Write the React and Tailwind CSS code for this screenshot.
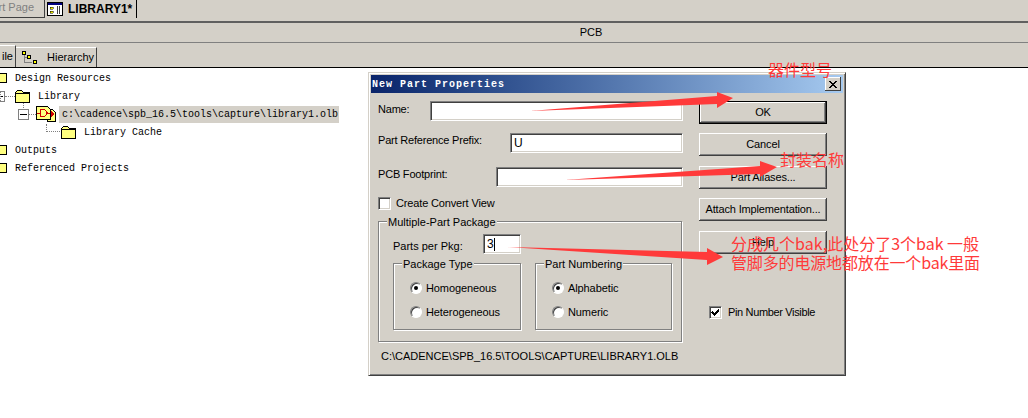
const UI = "font-['Liberation_Sans',sans-serif]"

function Folder() {
  return (
    <svg width="15" height="13" viewBox="0 0 15 13" shapeRendering="crispEdges">
      <path d="M0.5 12.5V2.5L2.5 0.5H6.5L8.5 2.5H14.5V12.5Z" fill="#ffff80" stroke="#000" />
      <path d="M1 3.5H14" stroke="#000" />
    </svg>
  )
}

function Marker() {
  return (
    <svg width="7" height="10" viewBox="0 0 7 10" shapeRendering="crispEdges">
      <path d="M-1 0.5H6.5V9.5H-1Z" fill="#ffff80" stroke="#000" />
    </svg>
  )
}

function LibraryIcon() {
  return (
    <svg width="20" height="16" viewBox="0 0 20 16" shapeRendering="crispEdges">
      <path d="M11.5 3.5H16.5L19.5 6.5V15.5H11.5Z" fill="#ffff80" stroke="#000" />
      <path d="M0.5 0.5H11.5L14.5 3.5V13.5H0.5Z" fill="#ffff80" stroke="#000" />
      <path d="M4.5 3.5V10.5H8.5L11.5 7L8.5 3.5Z M1 7H4 M11 7H14" fill="none" stroke="#d00000" />
      <path d="M15 5L18 8L15 11Z" fill="#d00000" />
    </svg>
  )
}

function MinusBox({ className = '' }) {
  return (
    <span className={`flex h-[11px] w-[11px] shrink-0 items-center justify-center border border-[#808080] bg-white ${className}`}>
      <span className="h-px w-[7px] bg-black" />
    </span>
  )
}

function TreeRow({ indent, children, text, selected }) {
  return (
    <div className="flex h-[18px] items-center whitespace-pre font-['Liberation_Mono',monospace] text-[10px] text-black" style={{ paddingLeft: indent }}>
      {children}
      <span className={selected ? 'ml-[3px] flex h-[17px] w-[280px] items-center bg-[#d4d0c8] pl-[3px]' : 'ml-[8px]'}>{text}</span>
    </div>
  )
}

function Field({ label, width, value, leading }) {
  return (
    <div className="flex h-[20px] items-start justify-between">
      <span className={`text-[11px] tracking-[-0.2px] ${leading}`}>{label}</span>
      <Input width={width} value={value} />
    </div>
  )
}

function Input({ width, value, caret }) {
  return (
    <span className="flex h-[20px] items-center border border-t-[#808080] border-r-white border-b-white border-l-[#808080] bg-white pl-[3px] text-[12px] shadow-[inset_1px_1px_0_#404040,inset_-1px_-1px_0_#d4d0c8]" style={{ width }}>
      {value}
      {caret && <span className="h-[13px] w-px bg-black" />}
    </span>
  )
}

function Button({ label, primary }) {
  return (
    <button className={`flex h-[23px] w-[128px] items-center justify-center bg-[#d4d0c8] text-[11px] tracking-[-0.15px] whitespace-nowrap ${primary ? 'border border-black shadow-[inset_-1px_-1px_0_#404040,inset_1px_1px_0_#fff,inset_-2px_-2px_0_#808080]' : 'shadow-[inset_-1px_-1px_0_#404040,inset_1px_1px_0_#fff,inset_-2px_-2px_0_#808080]'}`}>
      {label}
    </button>
  )
}

function Check({ checked }) {
  return (
    <span className="flex h-[13px] w-[13px] shrink-0 items-center justify-center border border-t-[#808080] border-r-white border-b-white border-l-[#808080] bg-white shadow-[inset_1px_1px_0_#404040,inset_-1px_-1px_0_#d4d0c8]">
      {checked && (
        <svg width="9" height="9" viewBox="0 0 9 9" shapeRendering="crispEdges">
          <path d="M1 4L3.5 6.5L8 1.5" fill="none" stroke="#000" strokeWidth="2" />
        </svg>
      )}
    </span>
  )
}

function Radio({ label, checked }) {
  return (
    <div className="flex h-[24px] items-center gap-[4px] text-[11px] tracking-[-0.1px]">
      <span className="flex h-[12px] w-[12px] shrink-0 items-center justify-center rounded-full border border-t-[#808080] border-r-white border-b-white border-l-[#808080] bg-white shadow-[inset_1px_1px_0_#404040]">
        {checked && <span className="h-[4px] w-[4px] rounded-full bg-black" />}
      </span>
      {label}
    </div>
  )
}

function Group({ title, className = '', children }) {
  return (
    <div className={`relative shrink-0 border border-[#808080] shadow-[inset_1px_1px_0_#fff,1px_1px_0_#fff] ${className}`}>
      <span className="absolute top-[-8px] left-[8px] bg-[#d4d0c8] px-[1px] text-[11px] leading-[16px] whitespace-nowrap">{title}</span>
      {children}
    </div>
  )
}

function Dialog() {
  return (
    <div className={`absolute top-[72px] left-[368px] flex h-[304px] w-[478px] flex-col border border-t-[#d4d0c8] border-r-[#404040] border-b-[#404040] border-l-[#d4d0c8] bg-[#d4d0c8] p-[2px] text-black shadow-[inset_1px_1px_0_#fff,inset_-1px_-1px_0_#808080] ${UI}`}>
      <div className="flex h-[18px] items-center justify-between bg-gradient-to-r from-[#0a246a] to-[#a6caf0] pr-[2px] pl-[1px]">
        <span className="font-['Liberation_Mono',monospace] text-[10px] font-bold tracking-[1px] text-white">New Part Properties</span>
        <span className="flex h-[14px] w-[16px] items-center justify-center bg-[#d4d0c8] shadow-[inset_-1px_-1px_0_#404040,inset_1px_1px_0_#fff]">
          <svg width="8" height="7" viewBox="0 0 8 7" shapeRendering="crispEdges">
            <path d="M0 0L8 7M8 0L0 7" stroke="#000" strokeWidth="1.5" />
          </svg>
        </span>
      </div>
      <div className="flex pl-[7px]">
        <div className="flex w-[305px] shrink-0 flex-col pt-[8px]">
          <Field label="Name:" width={253} leading="leading-[16px]" />
          <div className="mt-[12px]"><Field label="Part Reference Prefix:" width={173} value="U" leading="leading-[14px]" /></div>
          <div className="mt-[14px]"><Field label="PCB Footprint:" width={187} leading="leading-[14px]" /></div>
          <div className="mt-[9px] flex h-[14px] items-center gap-[5px] text-[11px] tracking-[-0.15px]">
            <Check />
            Create Convert View
          </div>
          <Group title="Multiple-Part Package" className="mt-[11px] h-[121px] w-[304px] pt-[12px] pl-[14px]">
            <div className="flex h-[20px] w-[128px] items-start justify-between">
              <span className="text-[11px] leading-[24px]">Parts per Pkg:</span>
              <Input width={38} value="3" caret />
            </div>
            <div className="mt-[9px] flex gap-[14px]">
              <Group title="Package Type" className="h-[67px] w-[128px] pt-[12px] pl-[16px]">
                <Radio label="Homogeneous" checked />
                <Radio label="Heterogeneous" />
              </Group>
              <Group title="Part Numbering" className="h-[67px] w-[137px] pt-[12px] pl-[16px]">
                <Radio label="Alphabetic" checked />
                <Radio label="Numeric" />
              </Group>
            </div>
          </Group>
          <div className="mt-[6px] pl-[3px] text-[11px] whitespace-nowrap">C:\CADENCE\SPB_16.5\TOOLS\CAPTURE\LIBRARY1.OLB</div>
        </div>
        <div className="ml-[16px] flex w-[128px] shrink-0 flex-col pt-[8px]">
          <Button label="OK" primary />
          <div className="mt-[9px]"><Button label="Cancel" /></div>
          <div className="mt-[10px]"><Button label="Part Aliases..." /></div>
          <div className="mt-[9px]"><Button label="Attach Implementation..." /></div>
          <div className="mt-[10px]"><Button label="Help" /></div>
          <div className="mt-[50px] flex items-center gap-[6px] pl-[10px] text-[11px] tracking-[-0.35px]">
            <Check checked />
            <span className="whitespace-nowrap">Pin Number Visible</span>
          </div>
        </div>
      </div>
    </div>
  )
}

export default function App() {
  return (
    <div className="relative h-[418px] w-[1028px] overflow-hidden bg-white">
      {/* Document tabs */}
      <div className={`flex h-[21px] items-start bg-[#d4d0c8] ${UI}`}>
        <div className="flex h-[18px] w-[45px] items-start justify-end border-r border-b border-r-[#404040] border-b-[#404040] pr-[10px] text-[11px] leading-[15px] whitespace-nowrap text-[#808080]">rt Page</div>
        <div className="flex h-[18px] w-[92px] items-center gap-[5px] border-r border-r-black pl-[2px] text-[12px] font-bold">
          <svg width="16" height="14" viewBox="0 0 16 14" shapeRendering="crispEdges">
            <rect x="0.5" y="0.5" width="15" height="13" fill="#fff" stroke="#000" />
            <rect x="1" y="1" width="14" height="2" fill="#000080" />
            <path d="M3 5H6V7H3ZM3 9H6V11H3Z" fill="#e8e800" stroke="#000" strokeWidth="0.5" />
            <path d="M10 4V12M12 4V12" stroke="#404040" />
          </svg>
          LIBRARY1*
        </div>
      </div>
      <div className="h-[2px] bg-[#606060]" />
      {/* Title band */}
      <div className={`flex h-[20px] items-center justify-center border-b border-b-[#808080] bg-[#d4d0c8] pl-[154px] text-[11px] ${UI}`}>
        PCB
      </div>
      {/* Project tabs */}
      <div className={`flex h-[25px] items-end border-b border-b-black bg-[#d4d0c8] text-[11px] ${UI}`}>
        <div className="flex h-[22px] w-[16px] items-center justify-end border-t border-r border-t-white border-r-[#404040] pr-[2px]">ile</div>
        <div className="flex h-[20px] w-[81px] items-center gap-[10px] border-t border-r border-t-white border-r-[#404040] pl-[6px]">
          <svg width="15" height="14" viewBox="0 0 15 14" shapeRendering="crispEdges">
            <path d="M2 3V11H10M2 6H6" stroke="#808080" fill="none" />
            <rect x="0.5" y="0.5" width="3" height="3" fill="#ffff00" stroke="#000" />
            <rect x="5.5" y="4.5" width="3" height="3" fill="#ffff00" stroke="#000" />
            <rect x="11.5" y="9.5" width="3" height="3" fill="#ffff00" stroke="#000" />
          </svg>
          Hierarchy
        </div>
      </div>
      {/* Tree */}
      <div className="relative pt-[1px]">
        <span className="absolute top-[23px] left-0 h-[10px] border-l border-dotted border-l-[#808080]" />
        <span className="absolute top-[35px] left-[23px] h-[7px] border-l border-dotted border-l-[#808080]" />
        <TreeRow indent={0} text="Design Resources">
          <Marker />
        </TreeRow>
        <TreeRow indent={0} text="Library">
          <MinusBox className="ml-[-6px]" />
          <span className="w-[10px] border-t border-dotted border-t-[#808080]" />
          <Folder />
        </TreeRow>
        <TreeRow indent={18} text="c:\cadence\spb_16.5\tools\capture\library1.olb" selected>
          <MinusBox />
          <span className="w-[7px] border-t border-dotted border-t-[#808080]" />
          <LibraryIcon />
        </TreeRow>
        <TreeRow indent={61} text="Library Cache">
          <span className="absolute left-[46px] h-[8px] w-[14px] translate-y-[-4px] border-b border-l border-dotted border-b-[#808080] border-l-[#808080]" />
          <Folder />
        </TreeRow>
        <TreeRow indent={0} text="Outputs">
          <Marker />
        </TreeRow>
        <TreeRow indent={0} text="Referenced Projects">
          <Marker />
        </TreeRow>
      </div>

      <Dialog />

      {/* Red annotations on top of the dialog */}
      <svg width="1028" height="418" className="pointer-events-none absolute top-0 left-0">
        <path d="M530 111L717 96L717 92L733 98L717 108L717 104Z" fill="#ff3a3a" />
        <path d="M565 180L760 166L760 161L777 167L760 177L760 174Z" fill="#ff3a3a" />
        <path d="M508 247L707 252L707 248L723 257L707 265L707 260Z" fill="#ff3a3a" />
      </svg>
      <div className="pointer-events-none absolute top-0 left-0 font-['Noto_Sans_CJK_SC',sans-serif] text-[16px] leading-[20px] whitespace-nowrap text-[#ff3a3a]">
        <span className="absolute top-[59px] left-[768px]">器件型号</span>
        <span className="absolute top-[149px] left-[780px]">封装名称</span>
        <span className="absolute top-[233px] left-[731px]">分成几个bak,此处分了3个bak 一般</span>
        <span className="absolute top-[252px] left-[731px] tracking-[-0.15px]">管脚多的电源地都放在一个bak里面</span>
      </div>
    </div>
  )
}
